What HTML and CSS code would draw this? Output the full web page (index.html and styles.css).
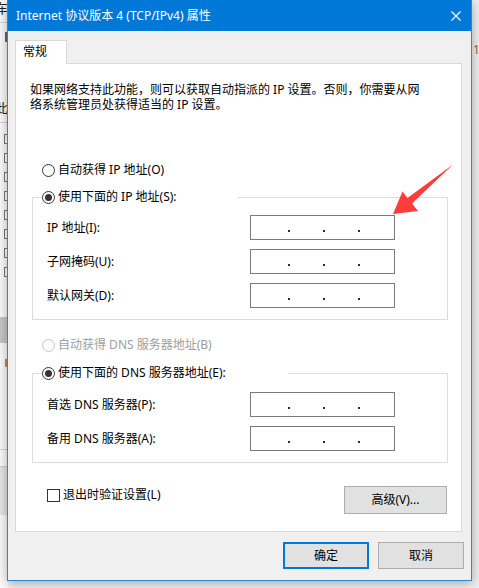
FILE: index.html
```html
<!DOCTYPE html>
<html lang="zh-CN">
<head>
<meta charset="utf-8">
<title>Internet 协议版本 4 (TCP/IPv4) 属性</title>
<link rel="stylesheet" href="styles.css">
</head>
<body>
<div class="desktop">
  <div class="bg-left">
    <div class="bg-char">车</div>
    <div class="bg-line l1"></div>
    <div class="bg-mark"></div>
    <div class="bg-char c2">此</div>
    <div class="bg-line l2"></div>
    <div class="bg-boxes">
      <span class="bg-box"></span><span class="bg-box"></span><span class="bg-box"></span><span class="bg-box"></span>
      <span class="bg-box"></span><span class="bg-box"></span><span class="bg-box"></span><span class="bg-box"></span>
    </div>
    <div class="bg-band"></div>
    <div class="bg-orange"></div>
    <div class="bg-line l3"></div>
    <div class="bg-line l4"></div>
    <div class="bg-gray"></div>
  </div>
  <div class="bg-right"><span class="bg-one">1</span></div>

  <div class="dialog">
    <div class="titlebar">
      <span class="title">Internet 协议版本 4 (TCP/IPv4) 属性</span>
      <svg class="close" width="10" height="10" viewBox="0 0 10 10"><path d="M0.5 0.5 L9.5 9.5 M9.5 0.5 L0.5 9.5" stroke="#fff" stroke-width="1.1" fill="none"/></svg>
    </div>
    <div class="body">
      <div class="tabs"><div class="tab">常规</div></div>
      <div class="panel">
        <p class="desc"><span class="dline">如果网络支持此功能，则可以获取自动指派的 IP 设置。否则，你需要从网</span><span class="dline">络系统管理员处获得适当的 IP 设置。</span></p>

        <div class="radio-row r1"><span class="circle"></span><span>自动获得 IP 地址(O)</span></div>

        <div class="group g1">
          <div class="group-head"><span class="circle checked"></span><span>使用下面的 IP 地址(S):</span></div>
          <div class="fields">
            <span class="flabel">IP 地址(I):</span>
            <span class="ipbox"><i class="dot"></i><i class="dot"></i><i class="dot"></i></span>
            <span class="flabel">子网掩码(U):</span>
            <span class="ipbox"><i class="dot"></i><i class="dot"></i><i class="dot"></i></span>
            <span class="flabel">默认网关(D):</span>
            <span class="ipbox"><i class="dot"></i><i class="dot"></i><i class="dot"></i></span>
          </div>
        </div>

        <div class="radio-row r3 disabled"><span class="circle"></span><span>自动获得 DNS 服务器地址(B)</span></div>

        <div class="group g2">
          <div class="group-head"><span class="circle checked"></span><span>使用下面的 DNS 服务器地址(E):</span></div>
          <div class="fields">
            <span class="flabel">首选 DNS 服务器(P):</span>
            <span class="ipbox"><i class="dot"></i><i class="dot"></i><i class="dot"></i></span>
            <span class="flabel">备用 DNS 服务器(A):</span>
            <span class="ipbox"><i class="dot"></i><i class="dot"></i><i class="dot"></i></span>
          </div>
        </div>

        <div class="footer-row">
          <div class="check"><span class="box"></span><span>退出时验证设置(L)</span></div>
          <button class="btn adv">高级(V)...</button>
        </div>
      </div>
      <div class="buttons">
        <button class="btn ok">确定</button>
        <button class="btn">取消</button>
      </div>
    </div>
  </div>

  <svg class="arrow" width="479" height="588" viewBox="0 0 479 588">
    <polygon points="393,214 402.5,191.5 407.5,198 453,164.5 412,203.5 418,211" fill="#ff3b3b"/>
  </svg>
</div>
</body>
</html>
```

FILE: styles.css
```css
html, body {
  margin: 0;
  padding: 0;
}
body {
  font-family: "Noto Sans", "Noto Sans CJK SC", sans-serif;
  font-size: 12px;
  line-height: 16px;
  color: #000;
}
.desktop {
  position: relative;
  width: 479px;
  height: 588px;
  overflow: hidden;
  background: #f0f0f0;
}

/* background windows peeking out */
.bg-left {
  position: absolute;
  left: 0;
  top: 0;
  width: 8px;
  height: 588px;
  background: #fafafa;
  overflow: hidden;
  display: flex;
  flex-direction: column;
}
.bg-char {
  height: 16px;
  margin-left: -5px;
  font-size: 13px;
  line-height: 16px;
  color: #222;
  white-space: nowrap;
}
.bg-char.c2 { margin-top: 58px; }
.bg-line {
  height: 1px;
  background: #cfcfcf;
  flex: none;
}
.bg-line.l1 { margin-top: 6px; }
.bg-line.l2 { margin-top: 6px; }
.bg-mark {
  width: 2px;
  height: 10px;
  margin: 9px 0 0 5px;
  background: #5a6a7a;
}
.bg-boxes {
  display: flex;
  flex-direction: column;
  gap: 9px;
  margin-top: 11px;
}
.bg-box {
  width: 10px;
  height: 10px;
  margin-left: 4px;
  box-sizing: border-box;
  border: 1px solid #777;
  background: #fff;
}
.bg-band {
  height: 26px;
  margin-top: 40px;
  background: #c6c6c6;
}
.bg-orange {
  width: 3px;
  height: 8px;
  margin: 16px 0 0 5px;
  background: #c98a3c;
}
.bg-line.l3 { margin-top: 82px; }
.bg-line.l4 { margin-top: 16px; }
.bg-gray {
  height: 48px;
  background: #e4e4e4;
}
.bg-right {
  position: absolute;
  right: 0;
  top: 0;
  width: 8px;
  height: 588px;
  background: #eeeeee;
}
.bg-one {
  display: block;
  margin: 42px 0 0 2px;
  font-size: 12px;
  color: #8a6a44;
}

/* dialog window */
.dialog {
  position: absolute;
  left: 7px;
  top: 0;
  width: 465px;
  height: 581px;
  box-sizing: border-box;
  border: 1px solid #2b86d6;
  border-top: none;
  background: #f0f0f0;
  box-shadow: 0 2px 10px rgba(0, 0, 0, 0.32);
  display: flex;
  flex-direction: column;
}
.titlebar {
  height: 31px;
  flex: none;
  background: #0078d7;
  color: #fff;
  display: flex;
  align-items: center;
  justify-content: space-between;
  padding: 0 10px 0 8px;
}
.title { white-space: nowrap; }
.close { display: block; }

.body {
  flex: 1;
  display: flex;
  flex-direction: column;
  padding: 9px 9px 11px 7px;
}
.tabs {
  display: flex;
  height: 23px;
  flex: none;
}
.tab {
  position: relative;
  z-index: 1;
  width: 52px;
  height: 24px;
  box-sizing: border-box;
  background: #fff;
  border: 1px solid #d9d9d9;
  border-bottom: none;
  padding-left: 7px;
  line-height: 21px;
}
.panel {
  height: 469px;
  flex: none;
  box-sizing: border-box;
  border: 1px solid #d9d9d9;
  background: #fff;
  display: flex;
  flex-direction: column;
}
.desc {
  margin: 18px 0 0 14px;
  display: flex;
  flex-direction: column;
  white-space: nowrap;
}
.dline {
  display: block;
  height: 15px;
  line-height: 15px;
}

.radio-row {
  display: flex;
  align-items: center;
  gap: 3px;
  height: 16px;
  margin-left: 26px;
  white-space: nowrap;
}
.r1 { margin-top: 50px; }
.r3 { margin-top: 17px; }
.circle {
  flex: none;
  width: 13px;
  height: 13px;
  box-sizing: border-box;
  border: 1px solid #333;
  border-radius: 50%;
  background: #fff;
  display: flex;
  align-items: center;
  justify-content: center;
}
.circle.checked::after {
  content: "";
  width: 7px;
  height: 7px;
  border-radius: 50%;
  background: #333;
}
.disabled { color: #9d9d9d; }
.disabled .circle { border-color: #c4c4c4; }

.group {
  border: 1px solid #dcdcdc;
  margin: 0 13px 0 16px;
}
.g1 { margin-top: 19px; }
.g2 { margin-top: 20px; }
.group-head {
  display: flex;
  align-items: center;
  gap: 3px;
  height: 16px;
  width: 246px;
  margin: -9px 0 0 9px;
  background: #fff;
  white-space: nowrap;
}
.g1 .group-head { width: 196px; }
.fields {
  display: grid;
  grid-template-columns: 203px 145px;
  grid-auto-rows: 25px;
  row-gap: 9px;
  align-items: center;
  margin-top: 10px;
  padding: 0 0 11px 14px;
}
.g2 .fields { margin-top: 11px; }
.flabel { white-space: nowrap; }
.ipbox {
  height: 25px;
  box-sizing: border-box;
  border: 1px solid #7a7a7a;
  background: #fff;
  display: flex;
  align-items: flex-start;
  gap: 33px;
  padding: 14px 0 0 37px;
}
.dot {
  width: 2px;
  height: 2px;
  background: #2a2a3a;
}

.footer-row {
  display: flex;
  justify-content: space-between;
  align-items: flex-start;
  margin-top: 23px;
  padding: 0 14px 0 31px;
}
.check {
  display: flex;
  align-items: center;
  gap: 3px;
  height: 16px;
  margin-top: 1px;
  white-space: nowrap;
}
.box {
  width: 13px;
  height: 13px;
  box-sizing: border-box;
  border: 1px solid #333;
  background: #fff;
}

.btn {
  font: inherit;
  color: #000;
  padding: 0;
  margin: 0;
  background: #e1e1e1;
  border: 1px solid #adadad;
  box-sizing: border-box;
  width: 86px;
  height: 27px;
}
.btn.adv {
  width: 103px;
  height: 28px;
}
.btn.ok {
  border: 2px solid #0078d7;
}
.buttons {
  display: flex;
  justify-content: flex-end;
  gap: 9px;
  margin: 10px -2px 0 0;
}

.arrow {
  position: absolute;
  left: 0;
  top: 0;
  pointer-events: none;
}
```
